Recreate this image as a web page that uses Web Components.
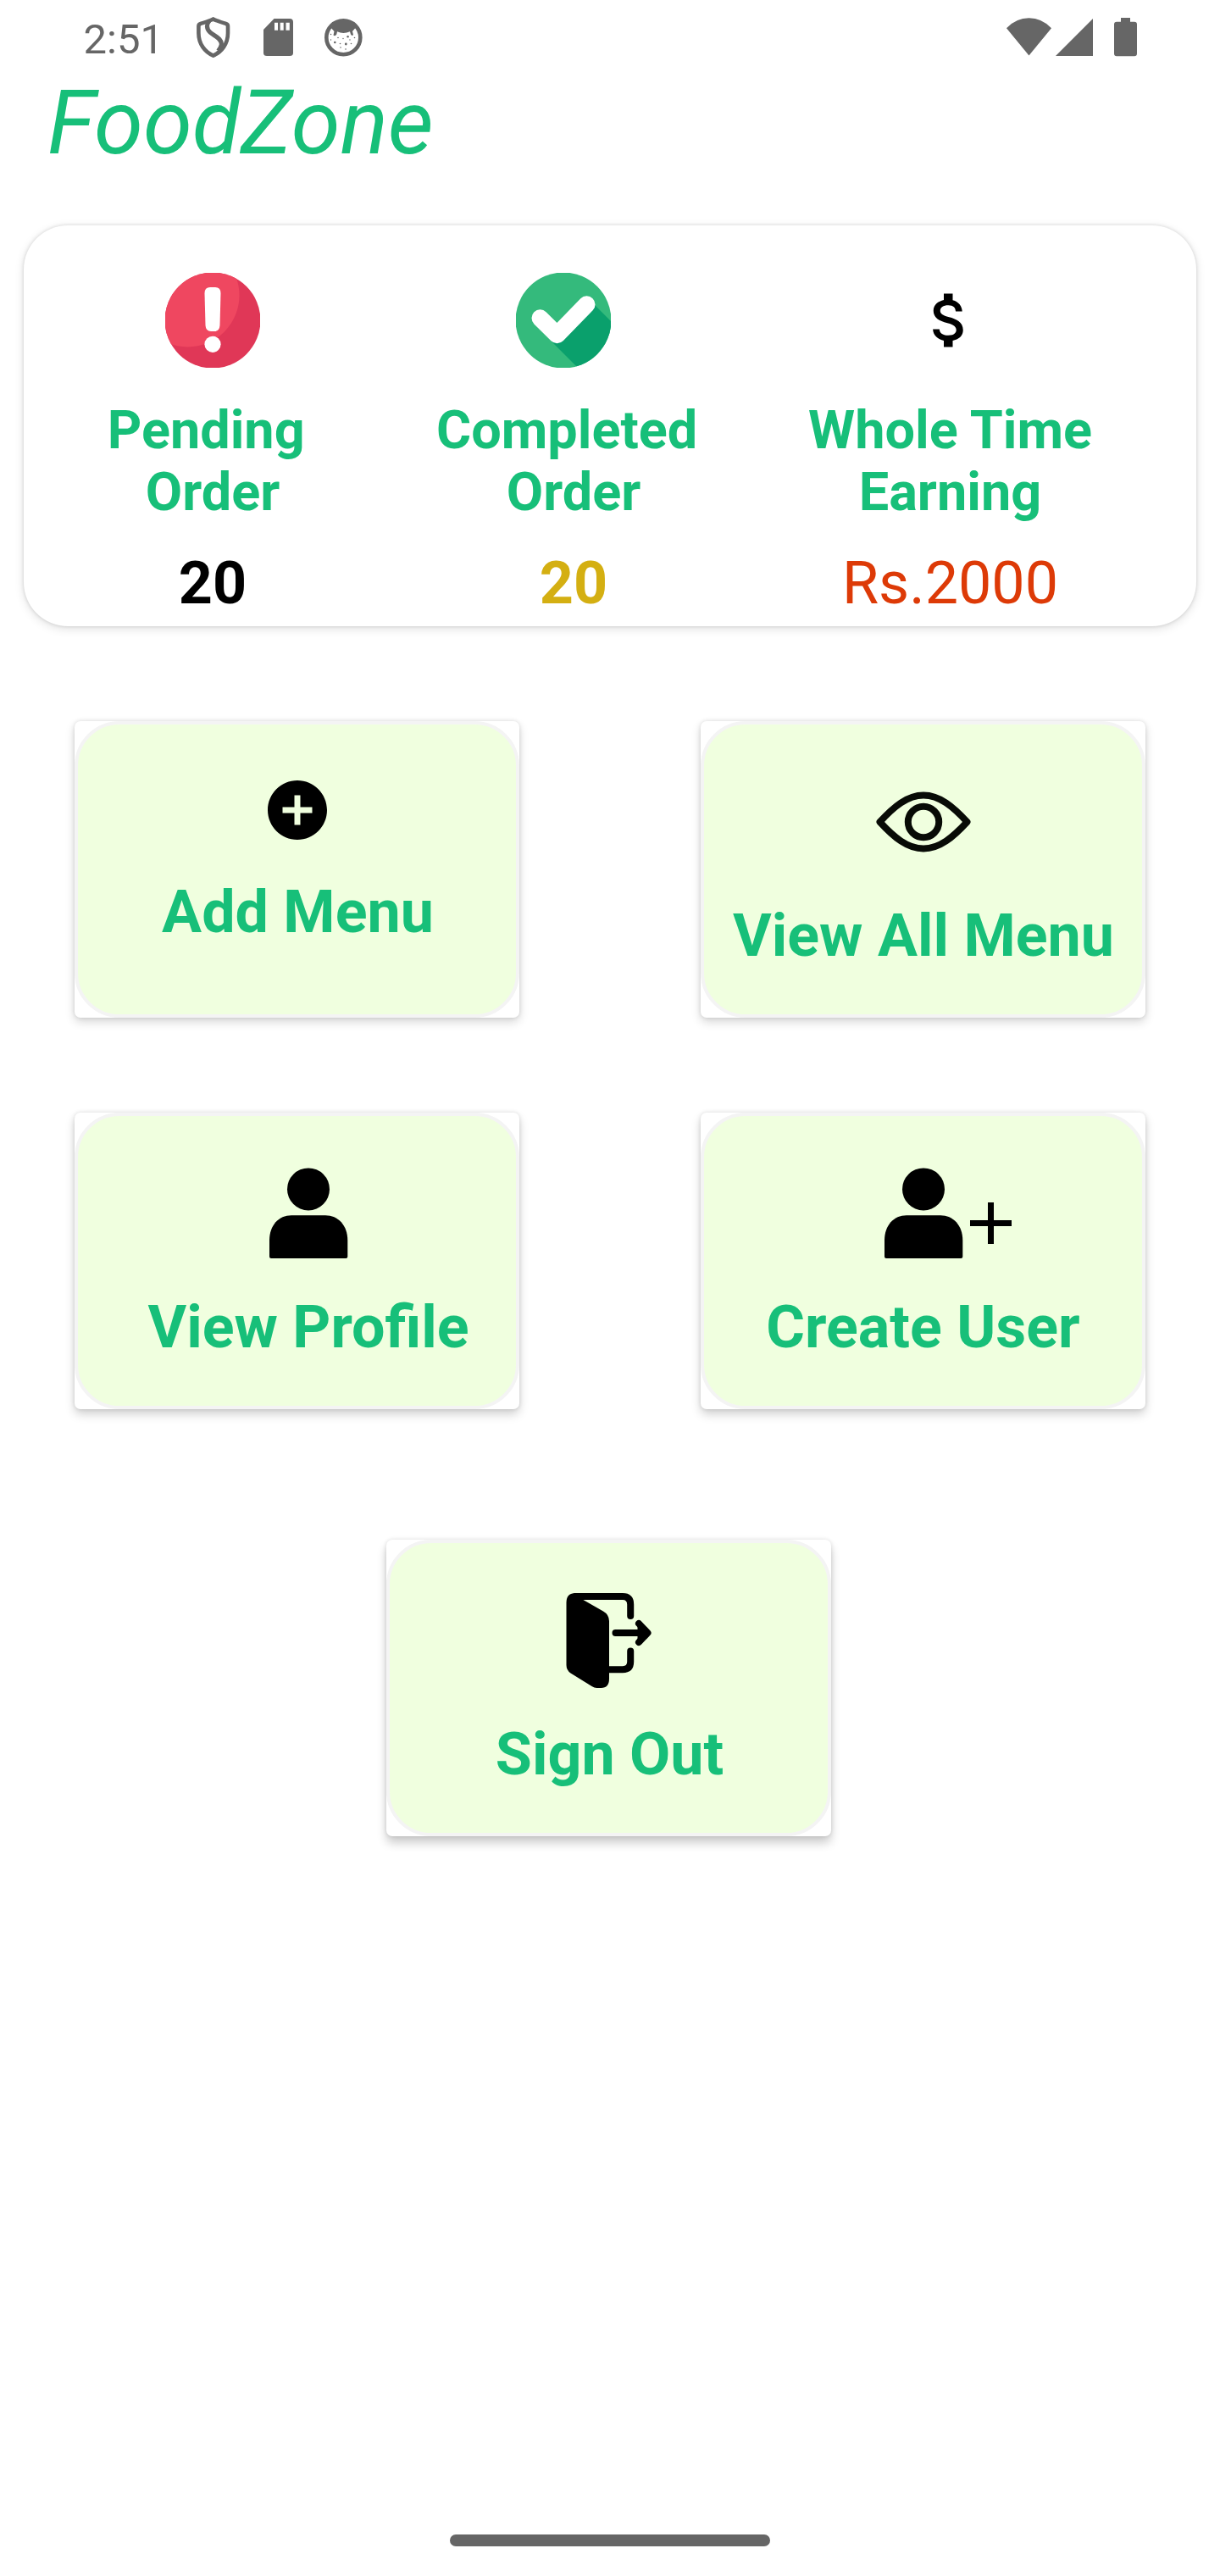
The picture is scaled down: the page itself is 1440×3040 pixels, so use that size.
<!DOCTYPE html>
<html lang="en">
<head>
<meta charset="utf-8">
<title>FoodZone</title>
<style>
  html, body { margin: 0; background: #fff; }
  body { width: 1440px; height: 3040px; overflow: hidden; font-family: Roboto, sans-serif; }
</style>
</head>
<body>
<food-app></food-app>

<template id="t-app">
  <style>
    :host { display: flex; flex-direction: column; width: 1440px; height: 3040px; box-sizing: border-box; background: #fff; --brand: #17bf79; }
    h1 { margin: 0; padding-left: 56px; font: italic 400 105px/123px Roboto, sans-serif; letter-spacing: -.2px; color: var(--brand); }
    summary-card { margin: 59px 28px 0; }
    .grid { display: grid; grid-template-columns: 525px 525px; column-gap: 214px; row-gap: 112px; padding: 112px 0 0 88px; }
    .last { display: flex; padding: 154px 0 0 456px; }
    .nav { margin: auto auto 35px; width: 378px; height: 14px; border-radius: 7px; background: #666; }
    .last menu-tile { --drop: 8px; --tint: .2; }
    .grid menu-tile:nth-child(n+3) { --drop: 6px; --tint: .18; }
  </style>
  <status-bar></status-bar>
  <h1>FoodZone</h1>
  <summary-card></summary-card>
  <div class="grid">
    <menu-tile style="--nudge:2px"><app-icon slot="icon" name="add"></app-icon>Add Menu</menu-tile>
    <menu-tile style="--nudge:1px"><app-icon slot="icon" name="eye"></app-icon>View All Menu</menu-tile>
    <menu-tile style="--lead:27px"><app-icon slot="icon" name="person"></app-icon>View Profile</menu-tile>
    <menu-tile><app-icon slot="icon" name="person" plus></app-icon>Create User</menu-tile>
  </div>
  <div class="last">
    <menu-tile style="--nudge:2px"><app-icon slot="icon" name="exit"></app-icon>Sign Out</menu-tile>
  </div>
  <div class="nav"></div>
</template>

<template id="t-status">
  <style>
    :host { display: flex; height: 84px; align-items: flex-start; color: #666; }
    .time { margin: 18px 39px 0 98.5px; font: 400 49px/57px Roboto, sans-serif; width: 94.5px; white-space: nowrap; }
    svg { display: block; flex: none; fill: #666; overflow: visible; }
  </style>
  <span class="time">2:51</span>
  <svg style="margin-top:20px" width="39.4" height="48" viewBox="0 0 39.4 48">
    <g fill="none" stroke="#666" stroke-width="4.6" stroke-linejoin="round">
      <path d="M19.7 2.4C15 5 9 6.600 4.200 8.200Q2.400 8.800 2.400 11V19C2.400 32 10 41.500 19.700 45.600C29.400 41.500 37 32 37 19V11Q37 8.800 35.200 8.200C30.400 6.600 24.400 5 19.700 2.400Z"/>
      <path d="M15 4.500C11.500 9 11.500 14 16 18.200C20.500 22.300 30.500 25.500 29.300 33C28.800 36.500 27 38 25.500 40" stroke-width="5.200"/>
    </g>
  </svg>
  <svg style="margin:22px 0 0 39.5px" width="35" height="44" viewBox="0 0 35 44">
    <path fill-rule="evenodd" d="M12.500 0H31Q35 0 35 4V40.500Q35 44 31 44H4Q0 44 0 40.500V13ZM13 4.700V13.700H17V4.700ZM19.700 4.700V13.700H23.700V4.700ZM26.500 4.700V13.700H30.800V4.700Z"/>
  </svg>
  <svg style="margin:22px 0 0 37px" width="44.600" height="44.600" viewBox="0 0 44.6 44.6">
    <circle cx="22.300" cy="22.300" r="20" fill="#fff" stroke="#666" stroke-width="4.600"/>
    <path d="M4 12L9 5Q22 -2 36 5L41 12L36.500 11L33 15L34 19Q32.500 21 31 18.500L30 15.300Q22.300 18.500 15 15.300L14.300 18.500Q12.500 21.500 10.500 19.500L11.500 15L7.800 11Z"/>
    <g><circle cx="12.300" cy="28" r="1.300"/><circle cx="25.300" cy="30" r="1.400"/><circle cx="27.600" cy="21.300" r="1.200"/><circle cx="7.500" cy="18.500" r=".8"/><circle cx="16" cy="22.500" r=".8"/><circle cx="22" cy="23.500" r=".7"/><circle cx="18.500" cy="29.500" r=".8"/><circle cx="7.500" cy="25" r=".7"/><circle cx="31.500" cy="29.500" r=".8"/><circle cx="35.500" cy="22.500" r=".8"/><circle cx="19" cy="34" r=".8"/><circle cx="25" cy="36" r=".8"/><circle cx="30" cy="25" r=".7"/></g>
  </svg>
  <svg style="margin:21px 0 0 760.400px" width="53" height="44.500" viewBox="0 0 53 44.5"><path d="M0 12.200Q11.500 .3 26.500 .3T53 12.200L26.500 44.500Z"/></svg>
  <svg style="margin:21.700px 0 0 4.700px" width="44" height="44" viewBox="0 0 44 44"><path d="M44 0V44H0Z"/></svg>
  <svg style="margin:21.300px 0 0 25.300px" width="27" height="45.200" viewBox="0 0 27 45.2"><path d="M8 0H19V4.700H24Q27 4.700 27 7.700V42.200Q27 45.200 24 45.200H3Q0 45.200 0 42.200V7.700Q0 4.700 3 4.700H8Z"/></svg>
</template>

<template id="t-summary">
  <style>
    :host { display: grid; grid-template-columns: 446px 406px 483px; height: 473px; box-sizing: border-box; padding-top: 56px; border-radius: 52px; background: #fff;
      box-shadow: 0 3px 12px rgba(0,0,0,.12), 0 0 4px rgba(0,0,0,.14); }
    .shift { margin-right: 24px; }
    .hair { margin-right: 2px; }
  </style>
  <summary-stat value="20" label="Pending |Order"><app-icon name="alert"></app-icon></summary-stat>
  <summary-stat value="20" label="Completed |Order" style="--value:#d4af12"><app-icon class="shift" name="check"></app-icon></summary-stat>
  <summary-stat value="Rs.2000" label="Whole Time|Earning" style="--value:#dd3a07;--weight:400"><app-icon class="hair" name="dollar"></app-icon></summary-stat>
</template>

<template id="t-stat">
  <style>
    :host { display: flex; flex-direction: column; align-items: center; }
    .icon { height: 112px; display: flex; align-items: center; }
    .label { margin-top: 37px; font: 700 63px/73px Roboto, sans-serif; color: #17bf79; text-align: center; white-space: pre; }
    .value { margin-top: 30px; font: var(--weight, 700) 70px/82px Roboto, sans-serif; color: var(--value, #000); }
  </style>
  <div class="icon"><slot></slot></div>
  <div class="label"></div>
  <div class="value"></div>
</template>

<template id="t-tile">
  <style>
    :host { display: block; width: 525px; height: 350px; border-radius: 7px; background: #fff;
      box-shadow: 0 var(--drop, 5px) 12px rgba(0,0,0,var(--tint, .16)), 0 0 5px rgba(0,0,0,.12); }
    .face { display: flex; flex-direction: column; align-items: center; box-sizing: border-box; width: 100%; height: 100%;
      padding: 59px 0 0 var(--lead, 0); border: 4px solid #f4f4f4; border-radius: 53px; background: #f0ffdf; }
    .label { margin-top: 37px; padding-left: var(--nudge, 0); font: 700 70px/82px Roboto, sans-serif; color: #17bf79; white-space: nowrap; }
  </style>
  <div class="face"><slot name="icon"></slot><div class="label"><slot></slot></div></div>
</template>

<script>
const icons = {
  add: [84, '0 0 24 24', '<path d="M12 2C6.480 2 2 6.480 2 12s4.480 10 10 10 10-4.480 10-10S17.520 2 12 2zm5 11h-4v4h-2v-4H7v-2h4V7h2v4h4v2z"/>'],
  dollar: [84, '0 0 24 24', '<path d="M11.800 10.900c-2.270-.59-3-1.200-3-2.150 0-1.090 1.010-1.850 2.700-1.850 1.780 0 2.440.85 2.500 2.100h2.210c-.07-1.720-1.120-3.300-3.210-3.810V3h-3v2.160c-1.940.42-3.500 1.680-3.500 3.610 0 2.310 1.910 3.460 4.700 4.130 2.500.6 3 1.480 3 2.410 0 .69-.49 1.790-2.700 1.790-2.060 0-2.870-.92-2.980-2.100h-2.200c.12 2.190 1.760 3.420 3.680 3.830V21h3v-2.150c1.950-.37 3.500-1.500 3.500-3.550 0-2.840-2.430-3.810-4.700-4.400z"/>'],
  eye: [112, '0 0 112 112', '<g fill="none" stroke="#080b06" stroke-width="8" stroke-linejoin="round"><path d="M4.500 56C21 38 37 24.500 56 24.500S91 38 107.500 56C91 74 75 87.500 56 87.500S21 74 4.500 56Z"/><circle cx="56" cy="56" r="18.200"/></g>'],
  person: [112, '0 0 112 112', '<circle cx="56" cy="27.400" r="25"/><path d="M10 107V88C10 70 21 58.300 36 58.300H76C91 58.300 102.300 70 102.300 88V107Q102.300 109 100.300 109H12Q10 109 10 107Z"/>'],
  exit: [112, '0.5 0 112 112', '<path d="M17 0L25 7.500L49.500 21.500Q56.500 25.500 56.500 33V101Q56.500 112 47 112H42Q39 112 36 110L11 94.500Q6 91 6 85V11Q6 0 17 0Z"/><g fill="none" stroke="#000" stroke-width="8" stroke-linecap="round" stroke-linejoin="round"><path d="M17 4H72.500Q81.700 4 81.700 13.500V27M81.700 68.500V81Q81.700 90.200 72.500 90.200H54"/><path d="M64 47H100M91.500 36L102 47L91.500 58"/></g><path d="M90 38L104 47L90 56Z"/>'],
  alert: [112, '0 0 112 112', '<clipPath id="c"><circle cx="56" cy="56" r="56.500"/></clipPath><g clip-path="url(#c)"><rect width="112" height="112" fill="#e03757"/><circle cx="26.500" cy="26.500" r="61" fill="#ef4760"/></g><path fill="#fff" d="M53 17H59Q65.500 17 65.500 24L64.500 62Q64 69 58 69H54Q48 69 47.500 62L46.500 24Q46.500 17 53 17Z"/><circle cx="56" cy="84.300" r="9.600" fill="#fff"/>'],
  check: [112, '0 0 112 112', '<clipPath id="c"><circle cx="56" cy="56" r="56.500"/></clipPath><g clip-path="url(#c)"><rect width="112" height="112" fill="#34ba7c"/><path fill="#0aa06c" d="M90 35L130 75L90 129L42 81Z"/></g><path d="M28.500 53.300L48.500 73.200L83.500 37.300" fill="none" stroke="#fff" stroke-width="20" stroke-linecap="round" stroke-linejoin="round"/>']
};
const stamp = (host, id) => {
  const root = host.attachShadow({ mode: 'open' });
  root.append(document.getElementById(id).content.cloneNode(true));
  return root;
};
customElements.define('app-icon', class extends HTMLElement {
  connectedCallback() {
    if (this.shadowRoot) return;
    const [size, box, body] = icons[this.getAttribute('name')];
    // The plus badge sits over the lower right side of the figure.
    const plus = this.hasAttribute('plus')
      ? '<svg class="plus" width="49" height="49" viewBox="0 0 14 14"><path d="M14 8H8v6H6V8H0V6h6V0h2v6h6z"/></svg>' : '';
    this.attachShadow({ mode: 'open' }).innerHTML =
      `<style>:host{display:block;flex:none;position:relative;width:${size}px;height:${size}px}svg{display:block}.plus{position:absolute;left:111.500px;top:42.500px}</style>
       <svg width="${size}" height="${size}" viewBox="${box}">${body}</svg>${plus}`;
  }
});
customElements.define('summary-stat', class extends HTMLElement {
  connectedCallback() {
    if (this.shadowRoot) return;
    const root = stamp(this, 't-stat');
    root.querySelector('.label').textContent = this.getAttribute('label').replace('|', '\n');
    root.querySelector('.value').textContent = this.getAttribute('value');
  }
});
for (const [tag, id] of [['menu-tile', 't-tile'], ['status-bar', 't-status'], ['summary-card', 't-summary'], ['food-app', 't-app']]) {
  customElements.define(tag, class extends HTMLElement {
    connectedCallback() { if (!this.shadowRoot) stamp(this, id); }
  });
}
</script>
</body>
</html>
